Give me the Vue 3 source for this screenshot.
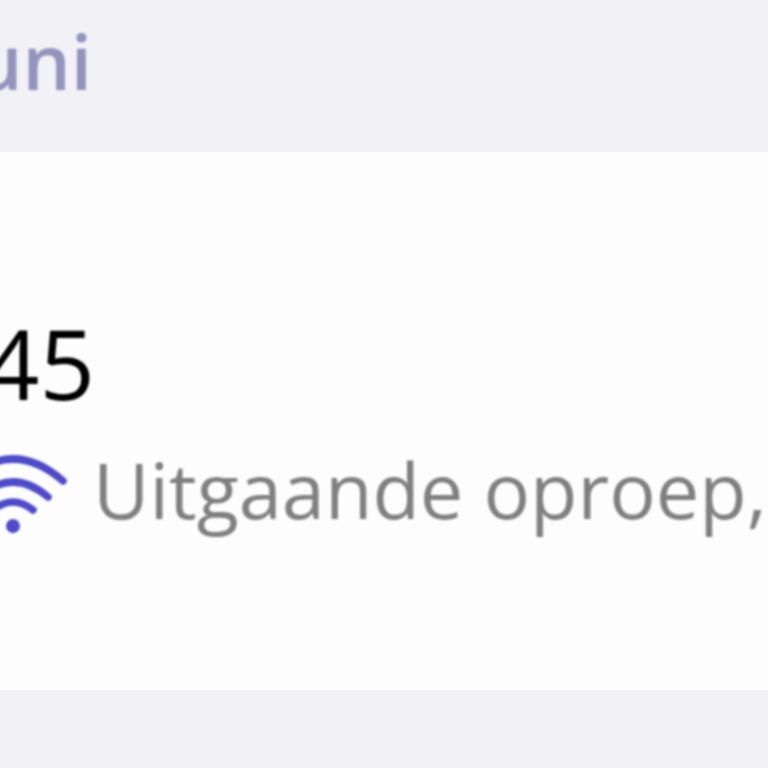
<script setup>
</script>

<template>
  <div class="page">
    <div class="header"><span class="date">Juni</span></div>
    <div class="card">
      <div class="number">0645</div>
      <svg class="wifi" viewBox="-40 450 110 90" aria-hidden="true">
        <path d="M-37 481 Q13 437 63 481" />
        <path d="M-22 497 Q13 467 48 497" />
        <path d="M-7 510 Q13 494 33 510" />
        <circle cx="13" cy="526" r="7" />
      </svg>
      <span class="label">Uitgaande oproep, 2 min</span>
    </div>
    <div class="rest"></div>
  </div>
</template>

<style scoped>
.page { width: 768px; height: 768px; background: #f1f1f6; overflow: hidden; display: flex; flex-direction: column; font-family: "Open Sans", "Noto Sans", sans-serif; }
.header { height: 152px; flex: none; position: relative; }
.date { position: absolute; right: 676px; top: 11px; font-size: 76px; line-height: 100px; font-weight: 600; color: #9393bd; white-space: nowrap; filter: blur(1px); }
.card { height: 538px; flex: none; background: #fdfdfd; position: relative; }
.number { position: absolute; right: 673px; top: 150px; font-size: 97px; line-height: 120px; font-weight: 500; color: #000; white-space: nowrap; filter: blur(0.8px); }
.wifi { position: absolute; left: -40px; top: 298px; width: 110px; height: 90px; fill: none; stroke: #4f4bc8; stroke-width: 7.5; stroke-linecap: round; filter: blur(0.8px); }
.wifi circle { fill: #4f4bc8; stroke: none; }
.label { position: absolute; left: 93px; top: 287px; font-size: 77.5px; line-height: 100px; color: #808080; white-space: nowrap; filter: blur(0.8px); }
</style>
